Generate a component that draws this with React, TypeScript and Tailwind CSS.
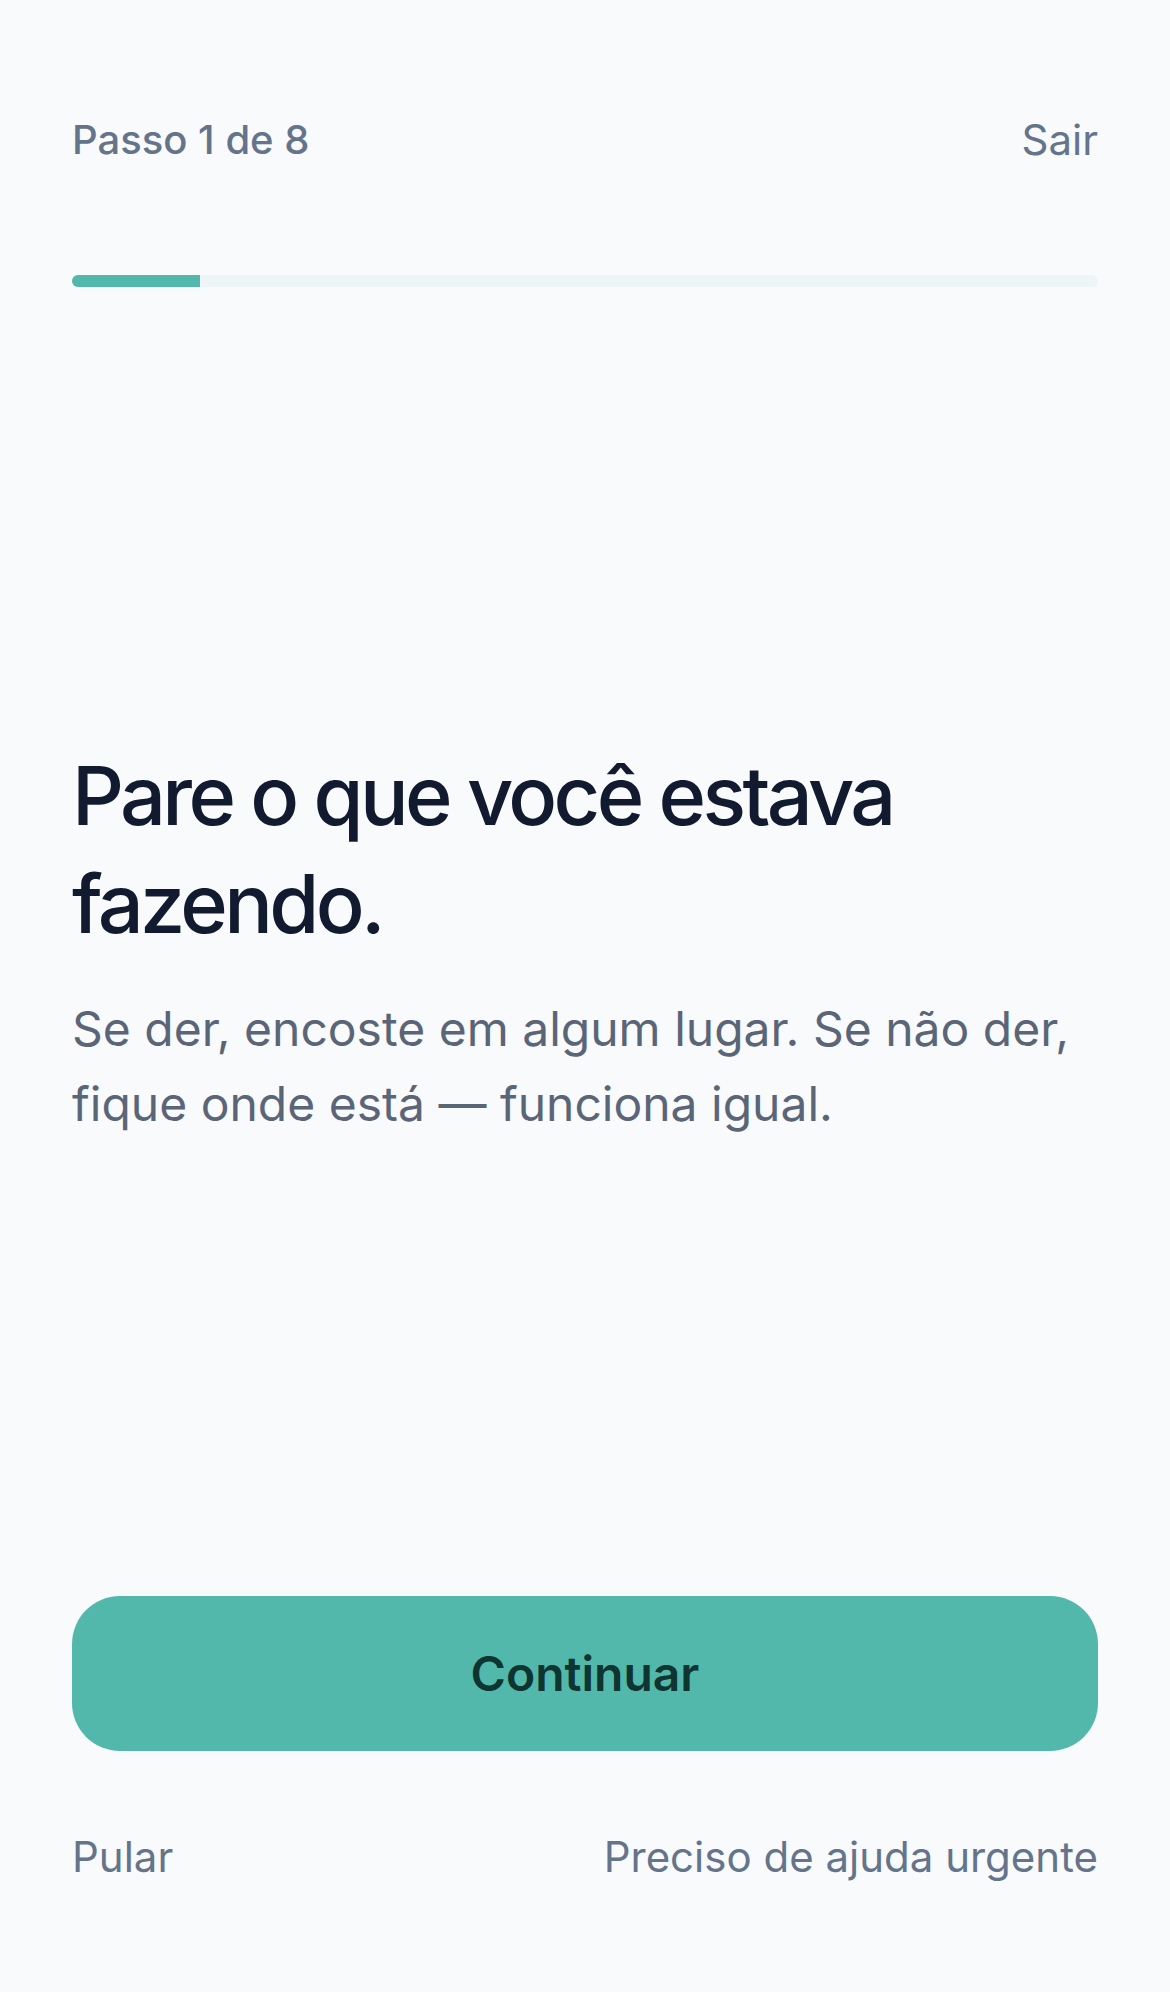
const App = () => {
  return (
    <div className="min-h-[1992px] w-full bg-[#f8fafc] flex flex-col px-[72px] pt-[110px] pb-[105px] font-['Inter',sans-serif]">
      <div className="flex justify-between items-center h-[60px]">
        <span className="text-[40px] leading-[60px] font-medium text-[#64748b]">Passo 1 de 8</span>
        <button className="text-[42px] leading-[60px] text-[#64748b]">Sair</button>
      </div>

      <div className="mt-[105px] h-[12px] w-full rounded-full bg-[#eef5f6] overflow-hidden flex">
        <div className="h-full w-[12.5%] bg-[#53b8ac]" />
      </div>

      <div className="flex-1 flex flex-col justify-center">
        <h1 className="text-[81px] leading-[108px] font-medium tracking-[-0.045em] text-[#111a2e]">
          Pare o que você estava fazendo.
        </h1>
        <p className="mt-[33px] text-[48px] leading-[75px] text-[#5b6578]">
          Se der, encoste em algum lugar. Se não der, fique onde está — funciona igual.
        </p>
      </div>

      <button className="h-[155px] w-full rounded-[48px] bg-[#53b8ac] text-[#0f3531] text-[48px] font-semibold">
        Continuar
      </button>

      <div className="mt-[76px] flex justify-between items-center h-[60px]">
        <button className="text-[42px] leading-[60px] text-[#64748b]">Pular</button>
        <button className="text-[42px] leading-[60px] text-[#64748b]">Preciso de ajuda urgente</button>
      </div>
    </div>
  )
}

export default App
